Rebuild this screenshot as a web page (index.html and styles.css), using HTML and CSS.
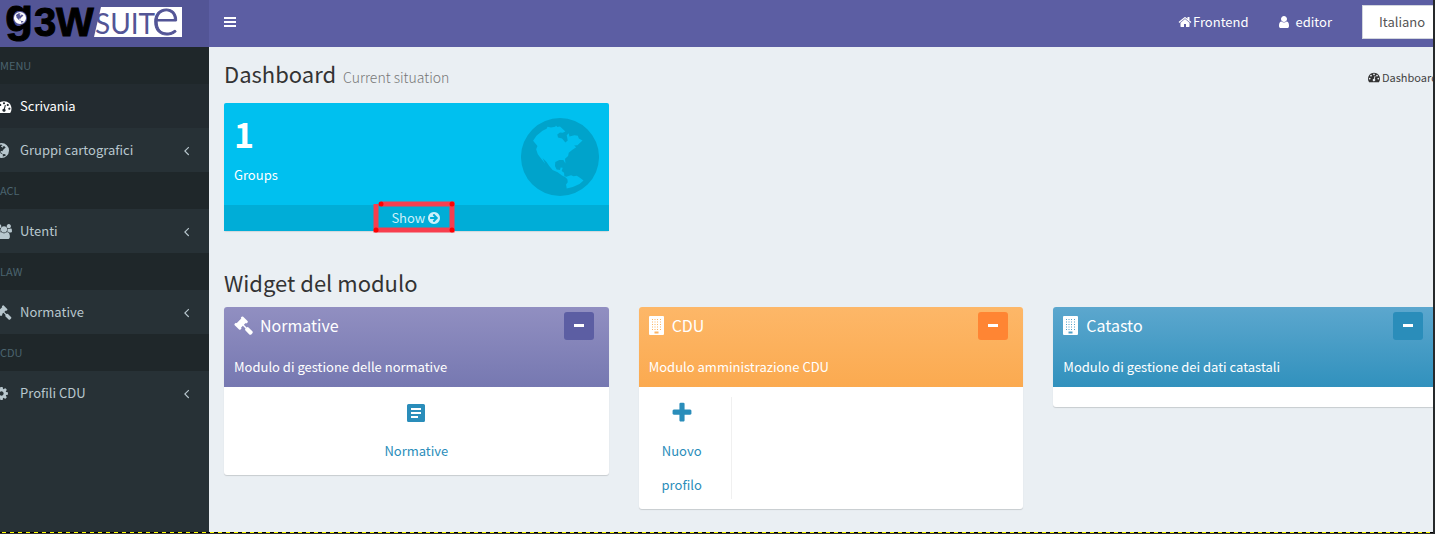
FILE: index.html
```html
<!DOCTYPE html>
<html lang="it">
<head>
<meta charset="utf-8">
<title>G3W Suite</title>
<link rel="stylesheet" href="styles.css">
</head>
<body>
<svg class="defs" aria-hidden="true">
  <symbol id="i-dash" viewBox="0 0 1792 1792"><path d="M384 1152q0-53-37.500-90.500t-90.500-37.500-90.500 37.500-37.500 90.500 37.500 90.500 90.500 37.500 90.500-37.500 37.500-90.500zm192-448q0-53-37.500-90.500t-90.500-37.500-90.500 37.500-37.500 90.500 37.500 90.500 90.500 37.500 90.500-37.500 37.500-90.500zm428 481l101-382q6-26-7.500-48.500t-38.500-29.500-48 6.500-30 39.500l-101 382q-60 5-107 43.500t-63 98.500q-20 77 20 146t117 89 146-20 89-117q16-60-6-117t-72-91zm660-33q0-53-37.500-90.500t-90.500-37.500-90.500 37.500-37.500 90.500 37.500 90.500 90.500 37.500 90.500-37.500 37.500-90.500zm-640-640q0-53-37.500-90.500t-90.500-37.500-90.500 37.500-37.500 90.500 37.500 90.500 90.500 37.500 90.500-37.500 37.500-90.500zm448 192q0-53-37.500-90.500t-90.500-37.500-90.500 37.500-37.500 90.500 37.500 90.500 90.500 37.500 90.500-37.500 37.500-90.500zm320 448q0 261-141 483-19 29-54 29h-1402q-35 0-54-29-141-221-141-483 0-182 71-348t191-286 286-191 348-71 348 71 286 191 191 286 71 348z"/></symbol>
  <symbol id="i-home" viewBox="0 0 1792 1792"><path d="M1472 992v480q0 26-19 45t-45 19h-384v-384h-256v384h-384q-26 0-45-19t-19-45v-480q0-1 .5-3t.5-3l575-474 575 474q1 2 1 6zm223-69l-62 74q-8 9-21 11h-3q-13 0-21-7l-692-577-692 577q-12 8-24 7-13-2-21-11l-62-74q-8-10-7-23.500t11-21.500l719-599q32-26 76-26t76 26l244 204v-195q0-14 9-23t23-9h192q14 0 23 9t9 23v408l219 182q10 8 11 21.500t-7 23.500z"/></symbol>
  <symbol id="i-user" viewBox="0 0 1792 1792"><path d="M1536 1399q0 109-62.500 187t-150.500 78h-854q-88 0-150.500-78t-62.500-187q0-85 8.500-160.500t31.500-152 58.500-131 94-89 134.500-34.500q131 128 313 128t313-128q76 0 134.500 34.500t94 89 58.500 131 31.500 152 8.500 160.500zm-256-887q0 159-112.500 271.500t-271.500 112.500-271.500-112.500-112.500-271.500 112.500-271.500 271.500-112.500 271.500 112.500 112.500 271.500z"/></symbol>
  <symbol id="i-left" viewBox="0 0 1792 1792"><path d="M1203 544q0 13-10 23l-393 393 393 393q10 10 10 23t-10 23l-50 50q-10 10-23 10t-23-10l-466-466q-10-10-10-23t10-23l466-466q10-10 23-10t23 10l50 50q10 10 10 23z"/></symbol>
  <symbol id="i-users" viewBox="0 0 1920 1792"><path d="M593 896q-162 5-265 128h-134q-82 0-138-40.500t-56-118.500q0-353 124-353 6 0 43.500 21t97.500 42.500 119 21.500q67 0 133-23-5 37-5 66 0 139 81 256zm1071 637q0 120-73 189.500t-194 69.500h-874q-121 0-194-69.500t-73-189.500q0-53 3.500-103.500t14-109 26.500-108.500 43-97.500 62-81 85.500-53.500 111.500-20q10 0 43 21.500t73 48 107 48 135 21.500 135-21.500 107-48 73-48 43-21.500q61 0 111.500 20t85.500 53.500 62 81 43 97.500 26.500 108.500 14 109 3.500 103.500zm-1024-1277q0 106-75 181t-181 75-181-75-75-181 75-181 181-75 181 75 75 181zm704 384q0 159-112.500 271.500t-271.500 112.500-271.500-112.500-112.500-271.500 112.500-271.500 271.500-112.500 271.500 112.500 112.500 271.500zm576 225q0 78-56 118.500t-138 40.500h-134q-103-123-265-128 81-117 81-256 0-29-5-66 66 23 133 23 59 0 119-21.500t97.500-42.500 43.500-21q124 0 124 353zm-128-609q0 106-75 181t-181 75-181-75-75-181 75-181 181-75 181 75 75 181z"/></symbol>
  <symbol id="i-gavel" viewBox="0 0 1792 1792"><path d="M1771 1536q0 53-37 90l-107 108q-39 37-91 37-53 0-90-37l-363-364q-38-36-38-90 0-53 43-96l-256-256-126 126q-14 14-34 14t-34-14q2 2 12.500 12t12.500 13 10 11.500 10 13.500 6 13.500 5.500 16.500 1.500 18q0 38-28 68-3 3-16.500 18t-19 20.500-18.500 16.500-22 15.500-22 9-26 4.500q-40 0-68-28l-408-408q-28-28-28-68 0-13 4.500-26t9-22 15.500-22 16.500-18.500 20.500-19 18-16.500q30-28 68-28 10 0 18 1.500t16.500 5.500 13.500 6 13.500 10 11.500 10 13 12.500 12 12.500q-14-14-14-34t14-34l348-348q14-14 34-14t34 14q-2-2-12.500-12t-12.500-13-10-11.500-10-13.500-6-13.500-5.500-16.500-1.500-18q0-38 28-68 3-3 16.500-18t19-20.500 18.500-16.500 22-15.500 22-9 26-4.500q40 0 68 28l408 408q28 28 28 68 0 13-4.500 26t-9 22-15.500 22-16.500 18.500-20.500 19-18 16.500q-30 28-68 28-10 0-18-1.500t-16.500-5.500-13.500-6-13.500-10-11.500-10-13-12.500-12-12.500q14 14 14 34t-14 34l-126 126 256 256q43-43 96-43 52 0 91 37l363 363q37 39 37 91z"/></symbol>
  <symbol id="i-cog" viewBox="0 0 1792 1792"><path d="M1152 896q0-106-75-181t-181-75-181 75-75 181 75 181 181 75 181-75 75-181zm512-109v222q0 12-8 23t-20 13l-185 28q-19 54-39 91 35 50 107 138 10 12 10 25t-9 23q-27 37-99 108t-94 71q-12 0-26-9l-138-108q-44 23-91 38-16 136-29 186-7 28-36 28h-222q-14 0-24.500-8.500t-11.500-21.500l-28-184q-49-16-90-37l-141 107q-10 9-25 9-14 0-25-11-126-114-165-168-7-10-7-23 0-12 8-23 15-21 51-66.500t54-70.500q-27-50-41-99l-183-27q-13-2-21-12.500t-8-23.500v-222q0-12 8-23t19-13l186-28q14-46 39-92-40-57-107-138-10-12-10-24 0-10 9-23 26-36 98.500-107.500t94.500-71.500q13 0 26 10l138 107q44-23 91-38 16-136 29-186 7-28 36-28h222q14 0 24.500 8.500t11.500 21.500l28 184q49 16 90 37l142-107q9-9 24-9 13 0 25 10 129 119 165 170 7 8 7 22 0 12-8 23-15 21-51 66.500t-54 70.500q26 50 41 98l183 28q13 2 21 12.500t8 23.500z"/></symbol>
  <symbol id="i-go" viewBox="0 0 1792 1792"><path d="M1413 896q0-27-18-45l-91-91-362-362q-18-18-45-18t-45 18l-91 91q-18 18-18 45t18 45l189 189h-502q-26 0-45 19t-19 45v128q0 26 19 45t45 19h502l-189 189q-18 18-18 45t18 45l91 91q18 18 45 18t45-18l362-362 91-91q18-18 18-45zm251 0q0 209-103 385.500t-279.500 279.500-385.500 103-385.500-103-279.500-279.500-103-385.500 103-385.500 279.500-279.500 385.500-103 385.500 103 279.500 279.500 103 385.500z"/></symbol>
  <symbol id="i-plus" viewBox="0 0 1792 1792"><path d="M1600 736v192q0 40-28 68t-68 28h-416v416q0 40-28 68t-68 28h-192q-40 0-68-28t-28-68v-416h-416q-40 0-68-28t-28-68v-192q0-40 28-68t68-28h416v-416q0-40 28-68t68-28h192q40 0 68 28t28 68v416h416q40 0 68 28t28 68z"/></symbol>
  <symbol id="i-globe" viewBox="16 17 232 232"><path fill-rule="evenodd" d="M132 17a116 116 0 1 0 0 232a116 116 0 1 0 0-232zM52 85L62 70 80 55 92 49 95 43 105 45 118 43 120 39 124 44 132 42 148 57 140 61 132 60 124 66 126 75 138 78 148 90 155 84 152 68 158 62 160 72 175 68 185 70 188 78 199 84 190 92 184 98 174 99 180 104 168 112 158 120 156 130 147 138 148 152 142 142 130 142 118 148 117 160 122 170 132 172 134 164 140 165 137 175 144 180 145 190 152 192 155 190 165 187 172 190 182 189 190 194 202 203 190 213 170 222 152 227 150 215 155 208 154 199 148 193 138 188 125 178 110 172 100 160 92 148 80 136 88 153 75 137 66 125 61 110 65 100 60 94z"/></symbol>
  <symbol id="i-building" viewBox="0 0 15 19"><path fill-rule="evenodd" d="M1 0h13q1 0 1 1v17q0 1-1 1H1q-1 0-1-1V1q0-1 1-1zM3 3v1h1V3zm2.500 0v1h1V3zM8 3v1h1V3zm3 0v1h1V3zM3 5.500v1h1v-1zm2.500 0v1h1v-1zm2.500 0v1h1v-1zm3 0v1h1v-1zM3 8v1h1V8zm2.500 0v1h1V8zM8 8v1h1V8zm3 0v1h1V8zM3 10.500v1h1v-1zm2.500 0v1h1v-1zm2.500 0v1h1v-1zm3 0v1h1v-1zM3 13v1h1v-1zm2.500 0v1h1v-1zM8 13v1h1v-1zm3 0v1h1v-1zM5.500 15.500v2h4v-2z"/></symbol>
  <symbol id="i-doc" viewBox="0 0 18 18"><path fill-rule="evenodd" d="M1.500 0h15Q18 0 18 1.500v15q0 1.500-1.500 1.500h-15Q0 18 0 16.500v-15Q0 0 1.500 0zM4 4v2h10V4zm0 4v2h10V8zm0 4v2h7v-2z"/></symbol>
</svg>

<div class="frame">
  <div class="viewport">
    <aside class="sidebar">
      <a class="logo" href="#" aria-label="G3W Suite">
        <svg viewBox="0 0 209 47" width="209" height="47">
          <path d="M101 7H182V37H94z" fill="#fff"/>
          <text class="logo-g" x="5" y="31">g</text>
          <text class="logo-bold" x="34" y="36">3</text>
          <text class="logo-bold" x="56" y="36">W</text>
          <text class="logo-thin" x="95" y="34">SUIT</text>
          <text class="logo-e" x="152" y="35">e</text>
          <circle cx="20" cy="18" r="7" fill="#535596"/>
          <use href="#i-globe" x="14" y="12" width="12" height="12" fill="#fff"/>
        </svg>
      </a>
      <nav class="menu">
        <h2 class="menu-title">MENU</h2>
        <a class="menu-item active" href="#"><svg class="icon"><use href="#i-dash"/></svg><span>Scrivania</span></a>
        <a class="menu-item" href="#"><svg class="icon small"><use href="#i-globe"/></svg><span>Gruppi cartografici</span><svg class="arrow"><use href="#i-left"/></svg></a>
        <h2 class="menu-title">ACL</h2>
        <a class="menu-item" href="#"><svg class="icon"><use href="#i-users"/></svg><span>Utenti</span><svg class="arrow"><use href="#i-left"/></svg></a>
        <h2 class="menu-title">LAW</h2>
        <a class="menu-item" href="#"><svg class="icon"><use href="#i-gavel"/></svg><span>Normative</span><svg class="arrow"><use href="#i-left"/></svg></a>
        <h2 class="menu-title">CDU</h2>
        <a class="menu-item" href="#"><svg class="icon small"><use href="#i-cog"/></svg><span>Profili CDU</span><svg class="arrow"><use href="#i-left"/></svg></a>
      </nav>
    </aside>

    <div class="page">
      <header class="navbar">
        <button class="toggle" type="button" aria-label="Menu"><svg viewBox="0 0 12 10" width="12" height="10"><path d="M0 0h12v2H0zM0 4h12v2H0zM0 8h12v2H0z"/></svg></button>
        <a class="nav-link" href="#"><svg class="icon"><use href="#i-home"/></svg>Frontend</a>
        <a class="nav-link user" href="#"><svg class="icon"><use href="#i-user"/></svg>editor</a>
        <select class="language" aria-label="Lingua"><option>Italiano</option></select>
      </header>

      <main class="content">
        <div class="heading">
          <h1>Dashboard</h1>
          <small>Current situation</small>
          <a class="crumb" href="#"><svg class="icon"><use href="#i-dash"/></svg>Dashboard</a>
        </div>

        <div class="grid">
          <section class="stat">
            <div class="stat-body">
              <div>
                <strong>1</strong>
                <p>Groups</p>
              </div>
              <svg class="stat-globe"><use href="#i-globe"/></svg>
            </div>
            <a class="stat-footer" href="#">Show <svg class="icon"><use href="#i-go"/></svg>
              <svg class="marker" viewBox="0 0 82 32"><path d="M3 3V29H79V3H8"/><g><circle cx="8" cy="3" r="2.500"/><circle cx="79" cy="3" r="2.500"/><circle cx="3" cy="29" r="2.500"/><circle cx="79" cy="29" r="2.500"/></g></svg>
            </a>
          </section>
        </div>

        <h2 class="section-title">Widget del modulo</h2>
        <div class="grid">
          <section class="card purple">
            <header class="card-head">
              <div class="card-top">
                <svg class="card-icon"><use href="#i-gavel"/></svg>
                <h3>Normative</h3>
                <button type="button" aria-label="Riduci"><i></i></button>
              </div>
              <p>Modulo di gestione delle normative</p>
            </header>
            <div class="card-body">
              <a class="action full" href="#"><svg class="doc"><use href="#i-doc"/></svg><span>Normative</span></a>
            </div>
          </section>
          <section class="card orange">
            <header class="card-head">
              <div class="card-top">
                <svg class="card-icon building"><use href="#i-building"/></svg>
                <h3>CDU</h3>
                <button type="button" aria-label="Riduci"><i></i></button>
              </div>
              <p>Modulo amministrazione CDU</p>
            </header>
            <div class="card-body">
              <a class="action narrow" href="#"><svg class="plus"><use href="#i-plus"/></svg><span>Nuovo profilo</span></a>
            </div>
          </section>
          <section class="card blue">
            <header class="card-head">
              <div class="card-top">
                <svg class="card-icon building"><use href="#i-building"/></svg>
                <h3>Catasto</h3>
                <button type="button" aria-label="Riduci"><i></i></button>
              </div>
              <p>Modulo di gestione dei dati catastali</p>
            </header>
            <div class="card-body"></div>
          </section>
        </div>
      </main>
    </div>
  </div>
  <div class="edge"></div>
</div>
</body>
</html>
```
FILE: styles.css
```css
* { box-sizing: border-box; }
body {
  margin: 0;
  overflow: hidden;
  font: 400 13px/20px "Noto Sans CJK SC", "Noto Sans", sans-serif;
  color: #333;
}
h1, h2, h3, p { margin: 0; font-weight: 400; }
a { color: inherit; text-decoration: none; }
svg { fill: currentColor; }
.defs { position: absolute; width: 0; height: 0; }
.icon { width: 14px; height: 14px; flex: none; }

.frame {
  display: flex;
  flex-direction: column;
  height: 100vh;
  padding-right: 2px;
  background: #26292b;
}
.viewport { display: flex; flex: 1; min-height: 0; overflow: hidden; background: #eaeff3; }
.edge {
  height: 2px;
  border-bottom: 1px solid #333;
  background: repeating-linear-gradient(90deg, #000 0 2px, #ff0 2px 6px, #000 6px 8px);
}

.sidebar { flex: none; width: 209px; background: #273136; color: #b8c7ce; }
.logo { display: block; height: 47px; background: #535596; }
.logo svg { display: block; overflow: visible; }
.logo text { fill: #000; }
.logo .logo-g { font: 700 46px "Liberation Sans", sans-serif; stroke: #000; stroke-width: 1px; }
.logo .logo-bold { font: 700 40px "Liberation Sans", sans-serif; stroke: #000; stroke-width: 1px; }
.logo .logo-thin { font: 400 28px Lato, sans-serif; fill: #535596; }
.logo .logo-e { font: 300 52px Lato, sans-serif; fill: #535596; stroke: #535596; stroke-width: 1px; }
.menu-title {
  height: 37px;
  background: #1f272a;
  color: #4b646f;
  font-size: 11px;
  line-height: 37px;
}
.menu-item { display: flex; align-items: center; height: 44px; padding-right: 15px; }
.menu-item .icon { width: 16px; height: 15px; margin: 0 8px 0 -4px; }
.menu-item .icon.small { width: 15px; margin: 0 11px 0 -6px; }
.menu-item span { flex: 1; }
.menu-item .arrow { width: 15px; height: 15px; }
.menu-item.active { background: #232b30; color: #fff; }

.page { flex: 1; margin-right: -20px; min-width: 0; }
.navbar {
  display: flex;
  align-items: center;
  height: 47px;
  padding: 0 1px 3px 15px;
  background: #5c5ea3;
  color: #fff;
}
.toggle { display: flex; margin-right: auto; padding: 0; border: 0; background: none; color: #fff; }
.nav-link { display: flex; align-items: center; gap: 1px; margin-right: 28px; }
.nav-link.user { gap: 5px; margin-right: 30px; }
.language {
  appearance: none;
  width: 90px;
  height: 34px;
  padding: 0 16px;
  border: 1px solid #d2d6de;
  border-radius: 0;
  background: #fff;
  color: #555;
  font: inherit;
}

.content { padding: 13px 15px 15px; }
.heading { display: flex; align-items: baseline; height: 43px; line-height: 26px; }
.heading h1, .section-title { font-size: 22px; line-height: 26px; }
.heading small { margin-left: 7px; color: #777; font-size: 14px; font-weight: 300; }
.crumb { display: flex; align-items: center; gap: 2px; margin-left: auto; font-size: 11px; color: #444; }
.crumb .icon { width: 12px; height: 12px; color: #333; }

.grid { display: grid; grid-template-columns: repeat(3, 1fr); align-items: start; gap: 30px; }
.stat { border-radius: 2px; background: #00c0ef; color: #fff; box-shadow: 0 1px 1px rgba(0, 0, 0, .1); }
.stat-body { display: flex; justify-content: space-between; height: 102px; padding: 10px; }
.stat-body strong { display: block; font-size: 34px; line-height: 42px; }
.stat-body p { margin-top: 10px; }
.stat-globe { width: 78px; height: 78px; margin-top: 5px; color: #00a3cb; }
.stat-footer {
  position: relative;
  display: flex;
  align-items: center;
  justify-content: center;
  gap: 2px;
  height: 26px;
  background: #00add7;
  color: #ccf0fa;
}
.marker {
  position: absolute;
  top: -4px;
  left: 149px;
  width: 82px;
  height: 32px;
  fill: none;
  stroke: #f73e4e;
  stroke-width: 5;
}
.marker g { fill: #f00; stroke: none; }
.section-title { margin: 38px 0 12px; }

.card { overflow: hidden; border-radius: 3px; background: #fff; box-shadow: 0 1px 1px rgba(0, 0, 0, .15); }
.card-head { height: 80px; padding: 5px 15px 0 10px; color: #fff; }
.card-top { display: flex; align-items: flex-start; height: 45px; }
.card-icon { width: 19px; height: 19px; margin: 4px 7px 0 0; }
.card-icon.building { width: 15px; margin-right: 8px; }
.card-top h3 { flex: 1; font-size: 16px; line-height: 26px; }
.card-top button { width: 30px; height: 28px; padding: 0 0 2px; border: 0; border-radius: 3px; }
.card-top i { display: block; width: 10px; height: 3px; margin: 0 auto; background: #fff; }
.purple .card-head { background: linear-gradient(#918fc1, #7678b1); }
.orange .card-head { background: linear-gradient(#fdb768, #fbaa50); }
.blue .card-head { background: linear-gradient(#5ca7ce, #3191bd); }
.purple button { background: #5c5ea3; }
.orange button { background: #ff8533; }
.blue button { background: #2a8dba; }
.card-body { padding: 10px 0; }
.action { display: flex; flex-direction: column; align-items: center; text-align: center; line-height: 34px; color: #2a8dba; }
.action.narrow { width: 93px; padding: 0 20px 0 14px; border-right: 1px solid #f0f0f0; }
.action span { margin-bottom: -3px; }
.action svg { width: 18px; height: 18px; margin: 7px 0 12px; }
.action .plus { width: 24px; height: 24px; margin: 4px 0 9px; }
```
